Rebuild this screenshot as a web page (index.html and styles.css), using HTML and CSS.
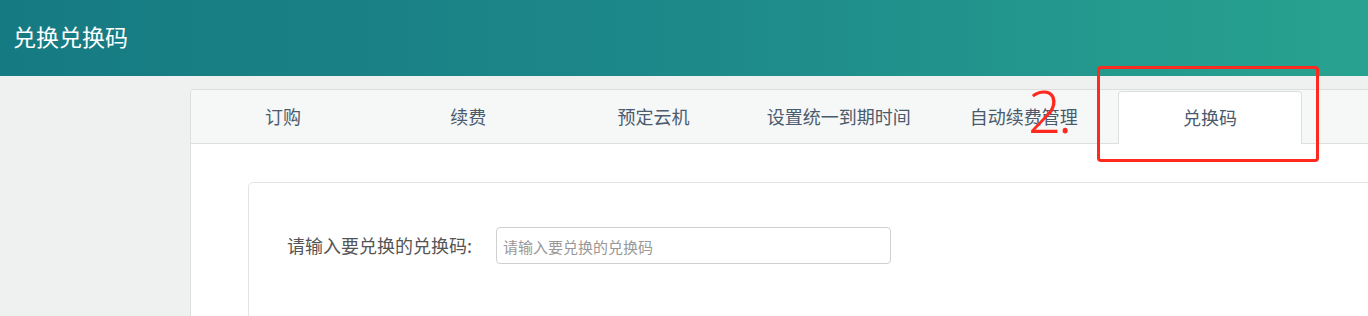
FILE: index.html
```html
<!DOCTYPE html>
<html lang="zh-CN">
<head>
    <meta charset="UTF-8">
    <meta name="viewport" content="width=device-width, initial-scale=1.0">
    <title>兑换兑换码</title>
    <link rel="stylesheet" href="styles.css">
</head>
<body>
    <header class="topbar">
        <h1>兑换兑换码</h1>
    </header>
    <div class="panel">
        <ul class="tabs">
            <li class="tab">订购</li>
            <li class="tab">续费</li>
            <li class="tab">预定云机</li>
            <li class="tab">设置统一到期时间</li>
            <li class="tab">自动续费管理</li>
            <li class="tab active">兑换码</li>
        </ul>
        <div class="tab-body">
            <form class="redeem-box">
                <label for="redeemCode">请输入要兑换的兑换码:</label>
                <input type="text" id="redeemCode" placeholder="请输入要兑换的兑换码">
            </form>
        </div>
    </div>
    <div class="mark-box"></div>
    <div class="mark-num">2.</div>
</body>
</html>
```
FILE: styles.css
```css
:root {
    --page-bg: #eff1f1;
    --tabbar-bg: #f6f7f7;
    --border: #dcdfdf;
    --tab-text: #4b5b6e;
    --label: #555;
    --placeholder: #999;
    --mark: #ff2a1f;
}
html, body {
    margin: 0;
    padding: 0;
}
body {
    font-family: "Noto Sans CJK SC", "Noto Sans", sans-serif;
    background-color: var(--page-bg);
    height: 316px;
    overflow: hidden;
}
.topbar {
    height: 76px;
    background: linear-gradient(90deg, #167a82 0%, #1c8789 45%, #28a290 100%);
    display: flex;
    align-items: center;
    padding-left: 13px;
}
.topbar h1 {
    margin: 0;
    font-size: 23px;
    font-weight: normal;
    color: #fff;
    line-height: 1;
    padding-bottom: 3px;
}
.panel {
    margin: 13px -20px 0 190px;
    background: #fff;
    border: 1px solid var(--border);
    border-radius: 4px 0 0 0;
    height: 226px;
    overflow: hidden;
}
.tabs {
    list-style: none;
    margin: 0;
    padding: 1px 0 0 0;
    display: flex;
    gap: 1px;
    background: var(--tabbar-bg);
    border-bottom: 1px solid var(--border);
    height: 52px;
    border-radius: 4px 0 0 0;
}
.tab {
    width: 184.2px;
    box-sizing: border-box;
    display: flex;
    align-items: center;
    justify-content: center;
    font-size: 18px;
    color: var(--tab-text);
    padding-bottom: 2px;
}
.tab.active {
    margin-left: 1px;
    background: #fff;
    border: 1px solid var(--border);
    border-bottom: none;
    border-radius: 4px 4px 0 0;
    height: 53px;
    margin-bottom: -1px;
}
.tab-body {
    padding: 38px 0 0 57px;
}
.redeem-box {
    border: 1px solid #e3e5e5;
    border-radius: 5px;
    height: 120px;
    padding: 44px 0 0 38px;
    display: flex;
    align-items: flex-start;
}
.redeem-box label {
    font-size: 18px;
    color: var(--label);
    line-height: 36px;
    margin-right: 24px;
}
.redeem-box input {
    width: 395px;
    height: 37px;
    box-sizing: border-box;
    border: 1px solid #cfd1d1;
    border-radius: 4px;
    padding: 2px 6px 0;
    font-size: 15px;
    font-family: "Noto Sans CJK SC", sans-serif;
    color: #333;
}
.redeem-box input::placeholder {
    color: var(--placeholder);
}
.mark-box {
    position: absolute;
    left: 1097px;
    top: 66px;
    width: 222px;
    height: 96px;
    box-sizing: border-box;
    border: 3px solid var(--mark);
    border-radius: 4px;
}
.mark-num {
    position: absolute;
    left: 1028px;
    top: 76px;
    font-family: "Noto Sans", sans-serif;
    font-weight: 300;
    font-size: 58px;
    line-height: 70px;
    color: var(--mark);
    letter-spacing: -3px;
}
```
